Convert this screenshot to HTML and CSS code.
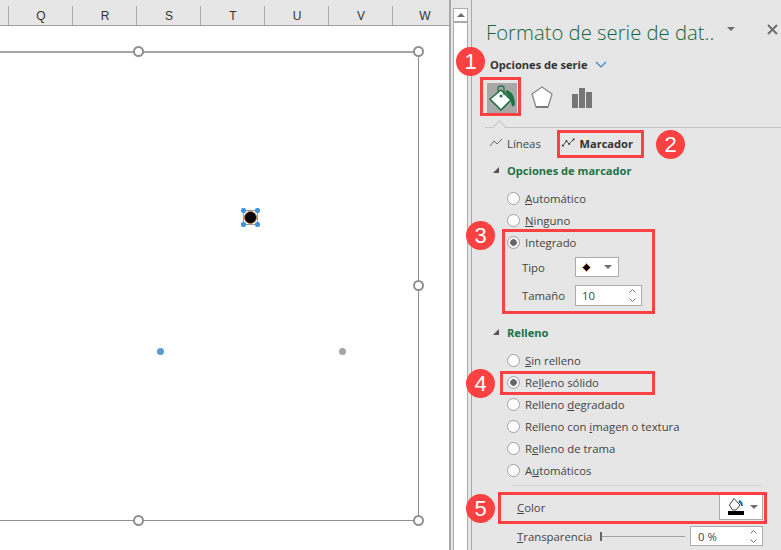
FILE: index.html
```html
<!DOCTYPE html>
<html lang="es">
<head>
    <meta charset="UTF-8">
    <title>Formato de serie de datos</title>
    <link rel="stylesheet" href="styles.css">
</head>
<body>
<div class="app">
    <div class="sheet">
        <div class="col-header">
            <div class="col col-first"></div>
            <div class="col">Q</div>
            <div class="col">R</div>
            <div class="col">S</div>
            <div class="col">T</div>
            <div class="col">U</div>
            <div class="col">V</div>
            <div class="col">W</div>
        </div>
        <div class="canvas">
            <div class="chart-box"></div>
            <span class="handle h-top-mid"></span>
            <span class="handle h-top-right"></span>
            <span class="handle h-mid-right"></span>
            <span class="handle h-bot-mid"></span>
            <span class="handle h-bot-right"></span>
            <div class="marker">
                <span class="marker-dot"></span>
                <span class="sel s-tl"></span>
                <span class="sel s-tr"></span>
                <span class="sel s-bl"></span>
                <span class="sel s-br"></span>
            </div>
            <span class="point point-blue"></span>
            <span class="point point-gray"></span>
        </div>
    </div>

    <div class="scrollbar">
        <div class="scroll-up"><span class="tri-up"></span></div>
    </div>

    <div class="pane">
        <div class="pane-title">
            <span class="title-text">Formato de serie de dat..</span>
            <span class="tri-down title-caret"></span>
            <svg class="title-close" width="11" height="11" viewBox="0 0 11 11"><path d="M1 1l9 9M10 1l-9 9" stroke="#6e6e6e" stroke-width="2" fill="none"/></svg>
        </div>
        <div class="series-options">
            <span>Opciones de serie</span>
            <svg width="12" height="7" viewBox="0 0 12 7"><path d="M1 1l5 5 5-5" stroke="#2e86c8" stroke-width="1.2" fill="none"/></svg>
        </div>
        <div class="icon-tabs">
            <div class="icon-tab icon-tab-on">
                <svg width="30" height="29" viewBox="0 0 30 29">
                    <path d="M3 15L14 6l10 10-10 10z" fill="#fff" stroke="#217346" stroke-width="1.6"/>
                    <path d="M11 8V4q0-2 3-2t3 2v7" fill="none" stroke="#217346" stroke-width="1.3"/>
                    <circle cx="14" cy="12" r="1.500" fill="#217346"/>
                    <path d="M20 6q8 3 8 15-2 2-3 1-1-8-7-14z" fill="#217346"/>
                </svg>
            </div>
            <div class="icon-tab">
                <svg width="24" height="26" viewBox="0 0 24 26">
                    <path d="M12 2l10 7-4 13H6L2 9z" fill="#fff" stroke="#8a8a8a" stroke-width="1.300"/>
                    <path d="M6 21h12v2H6z" fill="#7a7a7a"/>
                </svg>
            </div>
            <div class="icon-tab">
                <svg width="22" height="22" viewBox="0 0 22 22">
                    <path d="M1 7h6v14H1zM8 1h6v20H8zM15 5h6v16h-6z" fill="#767676"/>
                </svg>
            </div>
        </div>
        <div class="tab-rule"><span class="rule-notch"></span></div>
        <div class="sub-tabs">
            <div class="sub-tab">
                <svg width="14" height="10" viewBox="0 0 14 10"><path d="M1 8l4-5 3 3 5-5" stroke="#666" fill="none"/></svg>
                <span>Líneas</span>
            </div>
            <div class="sub-tab sub-tab-on">
                <svg width="16" height="10" viewBox="0 0 16 10"><path d="M2 8l4-5 3 3 5-5" stroke="#444" fill="none"/><path d="M1 7h2v2H1zM5 2h2v2H5zM8 5h2v2H8zM13 0h2v2h-2z" fill="#333"/></svg>
                <span>Marcador</span>
            </div>
        </div>

        <div class="section-head head-marker"><span class="tri-open"></span>Opciones de marcador</div>
        <div class="radios radios-marker">
            <div class="radio-row"><span class="radio"></span><u>A</u>utomático</div>
            <div class="radio-row"><span class="radio"></span><u>N</u>inguno</div>
            <div class="radio-row"><span class="radio radio-on"></span>Integrado</div>
        </div>
        <div class="field field-tipo">
            <span class="field-label">Tipo</span>
            <div class="select-box">
                <svg width="9" height="9" viewBox="0 0 9 9"><path d="M4.500 .5L8.500 4.500 4.500 8.500 .5 4.500z" fill="#000" stroke="#e8872c" stroke-width=".8"/></svg>
                <span class="tri-down"></span>
            </div>
        </div>
        <div class="field field-size">
            <span class="field-label">Tamaño</span>
            <div class="spin-box size-box">
                <span>10</span>
                <div class="spin">
                    <svg width="7" height="4" viewBox="0 0 7 4"><path d="M.5 3.500l3-3 3 3" stroke="#777" fill="none"/></svg>
                    <svg width="7" height="4" viewBox="0 0 7 4"><path d="M.5 .5l3 3 3-3" stroke="#777" fill="none"/></svg>
                </div>
            </div>
        </div>

        <div class="section-head head-fill"><span class="tri-open"></span>Relleno</div>
        <div class="radios radios-fill">
            <div class="radio-row"><span class="radio"></span><u>S</u>in relleno</div>
            <div class="radio-row"><span class="radio radio-on"></span>Re<u>l</u>leno sólido</div>
            <div class="radio-row"><span class="radio"></span>Relleno <u>d</u>egradado</div>
            <div class="radio-row"><span class="radio"></span>Relleno con <u>i</u>magen o textura</div>
            <div class="radio-row"><span class="radio"></span>R<u>e</u>lleno de trama</div>
            <div class="radio-row"><span class="radio"></span>A<u>u</u>tomáticos</div>
        </div>
        <div class="fill-rule"></div>
        <div class="color-row">
            <span><u>C</u>olor</span>
            <div class="color-btn">
                <svg width="17" height="20" viewBox="0 0 17 20">
                    <path d="M1.500 8L6 1.500 12 8l-4 5H4.500z" fill="#fff" stroke="#444"/>
                    <path d="M11 3q4 1 4 6h-2q0-3-2.500-3.500z" fill="#1f6fb5"/>
                    <path d="M0 14h16v4H0z" fill="#000"/>
                </svg>
                <span class="tri-down"></span>
            </div>
        </div>
        <div class="transp-row">
            <span class="transp-label"><u>T</u>ransparencia</span>
            <div class="slider"><span class="slider-thumb"></span></div>
            <div class="spin-box transp-box">
                <span>0 %</span>
                <div class="spin">
                    <svg width="7" height="4" viewBox="0 0 7 4"><path d="M.5 3.500l3-3 3 3" stroke="#777" fill="none"/></svg>
                    <svg width="7" height="4" viewBox="0 0 7 4"><path d="M.5 .5l3 3 3-3" stroke="#777" fill="none"/></svg>
                </div>
            </div>
        </div>
    </div>

    <!-- callouts drawn over the screenshot -->
    <div class="box box-1"></div>
    <div class="box box-2"></div>
    <div class="box box-3"></div>
    <div class="box box-4"></div>
    <div class="box box-5"></div>
    <div class="num num-1">1</div>
    <div class="num num-2">2</div>
    <div class="num num-3">3</div>
    <div class="num num-4">4</div>
    <div class="num num-5">5</div>
</div>
</body>
</html>
```

FILE: styles.css
```css
* {
    box-sizing: border-box;
}
body {
    margin: 0;
    font-family: "Open Sans", "Noto Sans", sans-serif;
    font-size: 11.35px;
    color: #444;
    background-color: #e6e6e6;
}
.app {
    position: relative;
    display: flex;
    width: 781px;
    height: 550px;
    overflow: hidden;
}

/* sheet */
.sheet {
    width: 451px;
    flex: none;
    overflow: hidden;
    border-right: 2px solid #a8a8a8;
    background-color: #fff;
}
.col-header {
    display: flex;
    height: 26px;
    background-color: #e6e6e6;
    border-bottom: 1px solid #a0a0a0;
}
.col {
    flex: none;
    width: 64px;
    margin-top: 6px;
    padding: 2px 0 0 1px;
    border-right: 1px solid #ababab;
    text-align: center;
    font-family: "Liberation Sans", sans-serif;
    font-size: 12px;
    line-height: 16px;
    color: #333;
}
.col-first {
    width: 9px;
}
.canvas {
    position: relative;
    height: 524px;
}
.chart-box {
    position: absolute;
    left: -2px;
    top: 25px;
    width: 421px;
    height: 470px;
    border: 1px solid #8f8f8f;
    border-top: 2px solid #a6a6a6;
}
.handle {
    position: absolute;
    width: 11px;
    height: 11px;
    border: 2px solid #8f8f8f;
    border-radius: 50%;
    background-color: #fff;
}
.h-top-mid { left: 133px; top: 20px; }
.h-top-right { left: 413px; top: 20px; }
.h-mid-right { left: 413px; top: 254px; }
.h-bot-mid { left: 133px; top: 489px; }
.h-bot-right { left: 413px; top: 489px; }
.marker {
    position: absolute;
    left: 243px;
    top: 184px;
    width: 15px;
    height: 15px;
    border: 1px solid #9a9a9a;
}
.marker-dot {
    position: absolute;
    left: 0;
    top: 0;
    width: 13px;
    height: 13px;
    border: 1px solid #b5742e;
    border-radius: 50%;
    background-color: #000;
}
.sel {
    position: absolute;
    width: 5px;
    height: 5px;
    background-color: #3d94e0;
    border-radius: 2px;
}
.s-tl { left: -3px; top: -3px; }
.s-tr { right: -3px; top: -3px; }
.s-bl { left: -3px; bottom: -3px; }
.s-br { right: -3px; bottom: -3px; }
.point {
    position: absolute;
    width: 7px;
    height: 7px;
    border-radius: 50%;
    top: 322px;
}
.point-blue { left: 157px; background-color: #5b9bd5; }
.point-gray { left: 339px; background-color: #a5a5a5; }

/* scrollbar */
.scrollbar {
    flex: none;
    width: 21px;
    margin-left: 0;
    padding: 0 3px 0 2px;
    border-right: 1px solid #a8a8a8;
    padding-top: 8px;
}
.scroll-up {
    height: 15px;
    display: flex;
    align-items: center;
    justify-content: center;
    background-color: #fff;
    border: 1px solid #ababab;
    border-bottom-width: 2px;
}
.scrollbar::after {
    content: "";
    display: block;
    height: 530px;
    background-color: #fff;
    border-left: 1px solid #ababab;
    border-right: 1px solid #ababab;
}
.tri-up {
    width: 0;
    height: 0;
    border-left: 4px solid transparent;
    border-right: 4px solid transparent;
    border-bottom: 4px solid #6e6e6e;
}
.tri-down {
    display: inline-block;
    width: 0;
    height: 0;
    border-left: 4px solid transparent;
    border-right: 4px solid transparent;
    border-top: 4px solid #6e6e6e;
}

/* format pane */
.pane {
    flex: 1;
    min-width: 0;
}
.pane-title {
    position: relative;
    height: 55px;
    padding: 18px 0 0 14px;
}
.title-text {
    font-size: 20.3px;
    line-height: 28px;
    font-weight: 300;
    color: #17653c;
    white-space: nowrap;
}
.title-caret {
    position: absolute;
    left: 255px;
    top: 27px;
}
.title-close {
    position: absolute;
    left: 295px;
    top: 24px;
}
.series-options {
    display: flex;
    align-items: center;
    gap: 7px;
    height: 18px;
    padding-left: 18px;
    font-size: 11.1px;
    font-weight: 700;
    color: #333;
}
.icon-tabs {
    display: flex;
    margin: 10px 0 0 15px;
    height: 30px;
}
.icon-tab {
    width: 30px;
    height: 30px;
    margin-right: 10px;
    display: flex;
    align-items: center;
    justify-content: center;
}
.icon-tab-on {
    background-color: #a8a8a8;
}
.tab-rule {
    position: relative;
    height: 1px;
    margin: 14px 0 0 13px;
    background-color: #c6c6c6;
}
.rule-notch {
    position: absolute;
    left: 10px;
    top: -5px;
    width: 9px;
    height: 9px;
    transform: rotate(45deg);
    background-color: #e6e6e6;
    border-left: 1px solid #c6c6c6;
    border-top: 1px solid #c6c6c6;
}
.sub-tabs {
    display: flex;
    height: 18px;
    margin-top: 6px;
    padding-left: 17px;
}
.sub-tab {
    display: flex;
    align-items: center;
    gap: 4px;
    width: 72px;
}
.sub-tab-on {
    font-size: 11.1px;
    font-weight: 700;
    color: #333;
}
.section-head {
    display: flex;
    align-items: center;
    height: 18px;
    padding-left: 21px;
    font-size: 11.1px;
    font-weight: 700;
    color: #217346;
}
.tri-open {
    width: 0;
    height: 0;
    margin-right: 8px;
    border-left: 6px solid transparent;
    border-bottom: 6px solid #555;
}
.head-marker {
    margin-top: 9px;
}
.head-fill {
    margin-top: 17px;
}
.radios-marker {
    margin-top: 8px;
}
.radios-fill {
    margin-top: 8px;
}
.radio-row {
    display: flex;
    align-items: center;
    height: 22px;
    padding-left: 35px;
    white-space: pre;
}
.radio-row u {
    text-underline-offset: 1px;
}
.radio {
    flex: none;
    width: 13px;
    height: 13px;
    margin-right: 5px;
    border: 1px solid #a0a0a0;
    border-radius: 50%;
    background-color: #fff;
}
.radio-on {
    background: radial-gradient(circle, #666 0 3px, #f4f4f4 3.5px);
}
.field {
    display: flex;
    align-items: center;
    padding-left: 50px;
}
.field-label {
    width: 53px;
}
.field-tipo {
    height: 20px;
    margin-top: 4px;
}
.field-size {
    height: 21px;
    margin-top: 8px;
}
.select-box {
    display: flex;
    align-items: center;
    justify-content: space-between;
    width: 44px;
    height: 20px;
    padding: 0 6px;
    background-color: #fff;
    border: 1px solid #ababab;
}
.spin-box {
    display: flex;
    align-items: center;
    justify-content: space-between;
    padding: 0 5px 0 6px;
    background-color: #fff;
    border: 1px solid #ababab;
}
.size-box {
    width: 67px;
    height: 21px;
}
.spin {
    display: flex;
    flex-direction: column;
    gap: 5px;
}
.fill-rule {
    height: 1px;
    margin: 4px 19px 0 40px;
    background-color: #d6d6d6;
}
.color-row {
    display: flex;
    align-items: center;
    justify-content: space-between;
    height: 26px;
    margin: 8px 18px 0 45px;
}
.color-btn {
    display: flex;
    align-items: center;
    gap: 5px;
    width: 44px;
    height: 26px;
    padding-left: 8px;
    background-color: #fff;
    border: 1px solid #ababab;
}
.transp-row {
    display: flex;
    align-items: center;
    height: 20px;
    margin-top: 6px;
    padding-left: 45px;
}
.transp-label {
    width: 83px;
}
.slider {
    position: relative;
    width: 85px;
    height: 1px;
    background-color: #a0a0a0;
}
.slider-thumb {
    position: absolute;
    left: 0;
    top: -4px;
    width: 2px;
    height: 9px;
    background-color: #666;
}
.transp-box {
    width: 73px;
    height: 20px;
    margin-left: 5px;
    padding-left: 7px;
}

/* callouts */
.box {
    position: absolute;
    border: 3px solid #fb4141;
}
.box-1 { left: 480px; top: 77px; width: 41px; height: 39px; }
.box-2 { left: 557px; top: 130px; width: 87px; height: 28px; }
.box-3 { left: 502px; top: 229px; width: 153px; height: 85px; }
.box-4 { left: 500px; top: 371px; width: 155px; height: 24px; }
.box-5 { left: 498px; top: 492px; width: 269px; height: 32px; }
.num {
    position: absolute;
    width: 29px;
    height: 29px;
    border-radius: 50%;
    background-color: #fb4141;
    color: #fff;
    font-family: "Liberation Sans", sans-serif;
    font-size: 22px;
    line-height: 29px;
    text-align: center;
}
.num-1 { left: 456px; top: 47px; }
.num-2 { left: 656px; top: 130px; }
.num-3 { left: 466px; top: 221px; }
.num-4 { left: 466px; top: 369px; }
.num-5 { left: 466px; top: 494px; }
```
